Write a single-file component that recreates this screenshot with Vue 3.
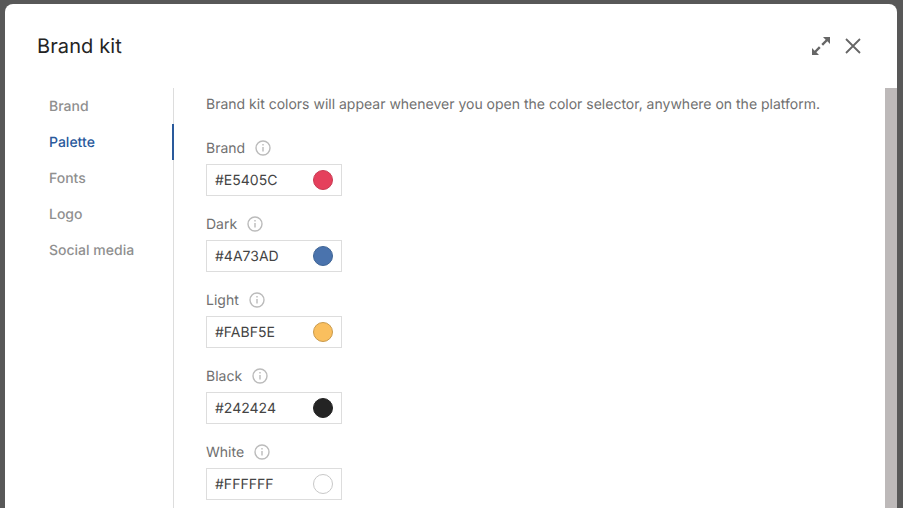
<template>
  <div class="backdrop">
    <div class="modal">
      <header class="head">
        <h1>Brand kit</h1>
        <div class="actions">
          <svg class="ico" width="18" height="18" viewBox="0 0 18 18" fill="#666" stroke="none">
            <path d="M11 0H18V7L15.35 4.35L11.05 8.65L9.35 6.95L13.65 2.65Z" />
            <path d="M7 18H0V11L2.65 13.65L6.95 9.35L8.65 11.05L4.35 15.35Z" />
          </svg>
          <svg class="ico" width="16" height="16" viewBox="0 0 16 16" fill="none" stroke="#666" stroke-width="1.8">
            <path d="M1 1l14 14M15 1L1 15" />
          </svg>
        </div>
      </header>
      <div class="body">
        <nav class="side">
          <a v-for="t in tabs" :key="t" class="tab" :class="{ on: t === 'Palette' }">{{ t }}</a>
        </nav>
        <main class="content">
          <p class="intro">Brand kit colors will appear whenever you open the color selector, anywhere on the platform.</p>
          <div v-for="c in colors" :key="c.name" class="field">
            <div class="label">
              <span>{{ c.name }}</span>
              <svg width="16" height="16" viewBox="0 0 16 16" fill="none" stroke="#bbb" stroke-width="1.4">
                <circle cx="8" cy="8" r="7" />
                <path d="M8 7v4.5M8 4v1.6" />
              </svg>
            </div>
            <div class="input">
              <span>{{ c.hex }}</span>
              <i class="dot" :style="{ background: c.hex, borderColor: c.border }"></i>
            </div>
          </div>
        </main>
        <div class="thumb"></div>
      </div>
    </div>
  </div>
</template>

<script setup>
const tabs = ['Brand', 'Palette', 'Fonts', 'Logo', 'Social media']

const colors = [
  { name: 'Brand', hex: '#E5405C', border: '#c93a52' },
  { name: 'Dark', hex: '#4A73AD', border: '#3f6596' },
  { name: 'Light', hex: '#FABF5E', border: '#c99a4c' },
  { name: 'Black', hex: '#242424', border: '#242424' },
  { name: 'White', hex: '#FFFFFF', border: '#c8c8c8' },
]
</script>

<style>
html,
body {
  margin: 0;
  overflow: hidden;
}
</style>

<style scoped>
.backdrop {
  height: 508px;
  background: #585858;
  padding: 4px 6px 0 5px;
  box-sizing: border-box;
  font-family: Inter, "Liberation Sans", sans-serif;
  text-rendering: geometricPrecision;
  overflow: hidden;
}

.modal {
  height: 504px;
  background: #fff;
  border-radius: 8px 8px 0 0;
  display: flex;
  flex-direction: column;
}

.head {
  height: 84px;
  flex-shrink: 0;
  display: flex;
  justify-content: space-between;
  padding: 29px 36px 0 32px;
  box-sizing: border-box;
}

h1 {
  margin: 0;
  font-size: 20px;
  line-height: 26px;
  font-weight: 400;
  letter-spacing: 0.1px;
  color: #242424;
}

.actions {
  display: flex;
  align-items: flex-start;
  gap: 15px;
  padding-top: 4px;
}

.ico {
  display: block;
}

.actions .ico:last-child {
  margin-top: 1px;
}

.body {
  flex: 1;
  display: flex;
  min-height: 0;
}

.side {
  width: 169px;
  flex-shrink: 0;
  box-sizing: border-box;
  border-right: 1px solid #ddd;
}

.tab {
  display: block;
  height: 36px;
  line-height: 38px;
  padding-left: 44px;
  font-size: 14px;
  font-weight: 500;
  color: #8f8f8f;
}

.tab.on {
  color: #2a5a9c;
  box-shadow: inset -2px 0 0 #2a5a9c;
  margin-right: -1px;
}

.content {
  flex: 1;
  min-width: 0;
  padding: 9px 0 0 32px;
  overflow: hidden;
}

.intro {
  margin: 0 0 26px;
  font-size: 14px;
  line-height: 16px;
  color: #707070;
}

.field {
  height: 76px;
}

.label {
  display: flex;
  align-items: center;
  gap: 10px;
  height: 18px;
  margin-bottom: 7px;
  font-size: 14px;
  color: #707070;
}

.input {
  width: 136px;
  height: 32px;
  box-sizing: border-box;
  border: 1px solid #ddd;
  display: flex;
  align-items: center;
  justify-content: space-between;
  padding: 0 8px;
  font-size: 14px;
  color: #444;
}

.dot {
  width: 20px;
  height: 20px;
  border-radius: 50%;
  border: 1px solid;
  box-sizing: border-box;
}

.thumb {
  width: 12px;
  flex-shrink: 0;
  background: #bdb9b9;
}
</style>
